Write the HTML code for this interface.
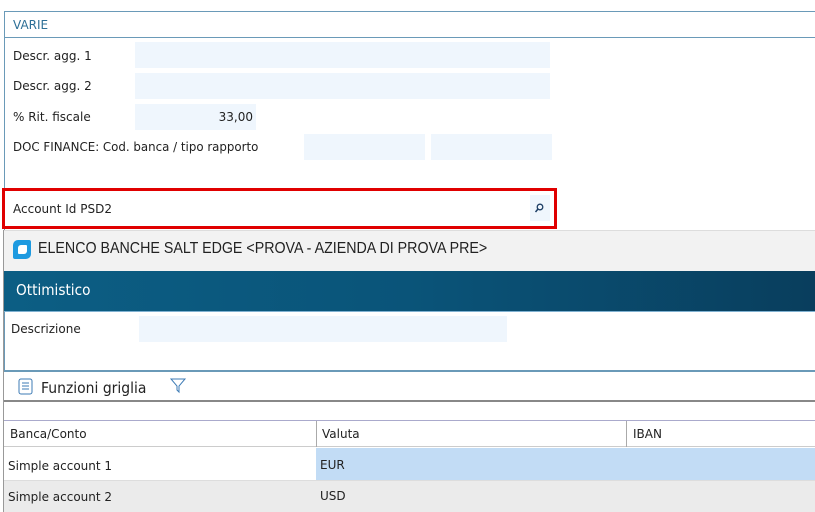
<!DOCTYPE html>
<html><head><style>
*{margin:0;padding:0;box-sizing:border-box}
body{width:815px;height:512px;overflow:hidden;background:#fff;font-family:Tahoma,"DejaVu Sans","Liberation Sans",sans-serif;font-size:12px;color:#222;position:relative}
.a{position:absolute}
.in{position:absolute;background:#eff6fd}
.lb{position:absolute;font-size:12px;white-space:nowrap;transform-origin:0 0}
</style></head><body>
<div class="a" style="left:4px;top:11px;width:815px;height:360px;border:1px solid #6a9ab8;border-right:none"></div>
<div class="a" style="left:5px;top:37px;width:810px;height:1px;background:#6a9ab8"></div>
<div class="lb" style="left:13px;top:18px;color:#2d6f96">VARIE</div>
<div class="lb" style="left:13px;top:49px">Descr. agg. 1</div>
<div class="in" style="left:135px;top:42px;width:415px;height:26px"></div>
<div class="lb" style="left:13px;top:79px">Descr. agg. 2</div>
<div class="in" style="left:135px;top:73px;width:415px;height:26px"></div>
<div class="lb" style="left:13px;top:110px">% Rit. fiscale</div>
<div class="in" style="left:135px;top:104px;width:121px;height:26px"></div>
<div class="lb" style="left:210px;top:110px;width:43px;text-align:right">33,00</div>
<div class="lb" style="left:13px;top:140px;transform:scaleX(0.985)">DOC FINANCE: Cod. banca / tipo rapporto</div>
<div class="in" style="left:304px;top:134px;width:121px;height:26px"></div>
<div class="in" style="left:431px;top:134px;width:121px;height:26px"></div>
<div class="a" style="left:2px;top:188px;width:555px;height:41px;border:3px solid #e00000;background:#fff"></div>
<div class="lb" style="left:13px;top:202px">Account Id PSD2</div>
<div class="a" style="left:530px;top:195px;width:20px;height:26px;background:#eff6fd"></div>
<svg class="a" style="left:533px;top:202px" width="12" height="12" viewBox="0 0 12 12"><circle cx="7" cy="5" r="2.8" fill="none" stroke="#1e3f66" stroke-width="1.3"/><path d="M5 7L2.5 10" stroke="#1e3f66" stroke-width="1.5"/></svg>
<div class="a" style="left:3px;top:230px;width:812px;height:41px;background:#f2f2f2;border-top:1px solid #ddd"></div>
<div class="a" style="left:13px;top:240px;width:18px;height:19px;background:#1e9ae0;border-radius:5px 2px 5px 2px"></div>
<div class="a" style="left:18px;top:245px;width:9px;height:9px;background:#fff;border-radius:3px 1px 3px 1px"></div>
<div class="lb" style="left:38px;top:240px;font-size:16px;font-family:'Liberation Sans',sans-serif;color:#222;transform:scaleX(0.89)">ELENCO BANCHE SALT EDGE &lt;PROVA - AZIENDA DI PROVA PRE&gt;</div>
<div class="a" style="left:4px;top:271px;width:811px;height:40px;background:linear-gradient(90deg,#0c5e84,#0a5479 50%,#093e5d)"></div>
<div class="a" style="left:4px;top:311px;width:811px;height:1px;background:#7fb1d1"></div>
<div class="lb" style="left:16px;top:281px;font-size:15px;color:#fff;transform:scaleX(0.91)">Ottimistico</div>
<div class="lb" style="left:11px;top:322px">Descrizione</div>
<div class="in" style="left:139px;top:316px;width:368px;height:26px"></div>
<div class="a" style="left:4px;top:370px;width:811px;height:2px;background:#6a9ab8"></div>
<svg class="a" style="left:18px;top:378px" width="16" height="17" viewBox="0 0 16 17"><rect x="1" y="1" width="13" height="15" rx="2" fill="#fff" stroke="#3d7bb5"/><path d="M4 5h7M4 8h7M4 11h7" stroke="#3d7bb5"/></svg>
<div class="lb" style="left:41px;top:379px;font-size:15px;color:#222;transform:scaleX(0.93)">Funzioni griglia</div>
<svg class="a" style="left:169px;top:377px" width="18" height="18" viewBox="0 0 18 18"><path d="M2 2h14l-6 7v6l-2-2V9z" fill="none" stroke="#3d7bb5"/></svg>
<div class="a" style="left:4px;top:400px;width:811px;height:2px;background:#888"></div>
<div class="a" style="left:4px;top:420px;width:811px;height:1px;background:#aac"></div>
<div class="a" style="left:4px;top:421px;width:811px;height:26px;background:#fff;border-bottom:1px solid #ccc"></div>
<div class="a" style="left:316px;top:421px;width:1px;height:26px;background:#aaa"></div>
<div class="a" style="left:626px;top:421px;width:1px;height:26px;background:#aaa"></div>
<div class="lb" style="left:10px;top:427px">Banca/Conto</div>
<div class="lb" style="left:322px;top:427px">Valuta</div>
<div class="lb" style="left:633px;top:427px">IBAN</div>
<div class="a" style="left:4px;top:448px;width:312px;height:32px;background:#fff"></div>
<div class="a" style="left:316px;top:448px;width:499px;height:32px;background:#c2dcf5"></div>
<div class="a" style="left:4px;top:480px;width:811px;height:32px;background:#ebebeb;border-top:1px solid #ddd"></div>
<div class="lb" style="left:8px;top:459px">Simple account 1</div>
<div class="lb" style="left:320px;top:458px">EUR</div>
<div class="lb" style="left:8px;top:490px">Simple account 2</div>
<div class="lb" style="left:320px;top:489px">USD</div>
<div class="a" style="left:3px;top:230px;width:1px;height:282px;background:#999"></div>
</body></html>
